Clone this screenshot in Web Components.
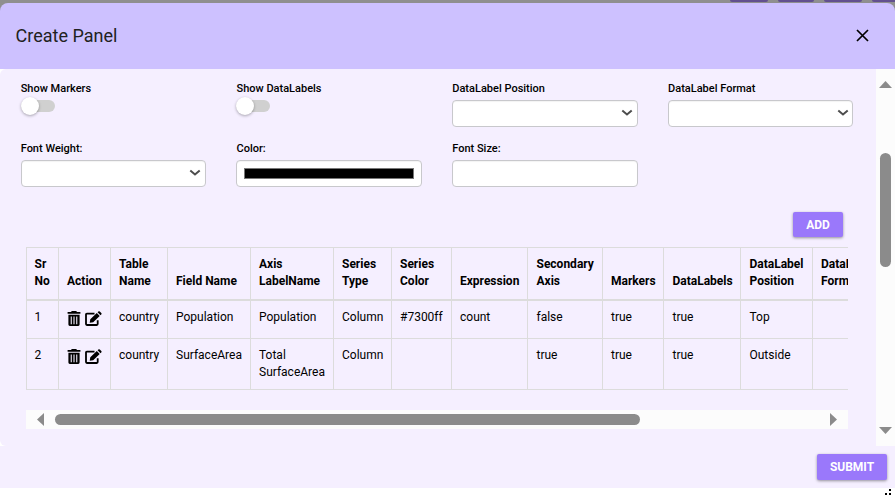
<!DOCTYPE html>
<html lang="en">
<head>
<meta charset="utf-8">
<title>Create Panel</title>
<style>
html,body{margin:0;padding:0;width:895px;height:496px;overflow:hidden;background:#fff}
body{font-family:Roboto,"Liberation Sans",sans-serif;color:#000}
</style>
</head>
<body>
<panel-dialog></panel-dialog>
<script>
function define(name, html, setup) {
  const tpl = document.createElement('template');
  tpl.innerHTML = html;
  customElements.define(name, class extends HTMLElement {
    connectedCallback() {
      if (this.shadowRoot) return;
      this.attachShadow({ mode: 'open' }).appendChild(tpl.content.cloneNode(true));
      if (setup) setup(this.shadowRoot, this);
    }
  });
}

define('page-strip', `
<style>
:host{display:flex;justify-content:flex-end;gap:10px;height:3px;background:#8f8f8f}
i{width:38px;height:2px;background:#62508f;border-radius:0 0 2px 2px}
i:nth-child(3){width:36px}
i:last-child{width:24px;margin-right:-1px}
</style><i></i><i></i><i></i><i></i>`);

define('dialog-header', `
<style>
:host{display:block;background:#8f8f8f;height:66px}
header{box-sizing:border-box;height:66px;display:flex;align-items:center;justify-content:space-between;padding:0 26px 0 15.5px;background:#cdc1ff;border-radius:8px 8px 0 0}
h1{margin:0;font-size:18px;line-height:24px;font-weight:400;color:#212121;letter-spacing:.01px}
svg{display:block;margin-top:-2px}
</style>
<header><h1><slot></slot></h1>
<svg width="13" height="13" viewBox="0 0 13 13" fill="none" stroke="#000" stroke-width="1.7"><path d="M1 1L12 12M12 1L1 12"/></svg></header>`);

define('form-field', `
<style>
:host{display:block;height:60px}
label{box-sizing:border-box;display:block;font-size:11px;line-height:16px;font-weight:500;height:20px;padding-top:1px;white-space:nowrap}
</style><label></label><slot></slot>`, (root, el) => {
  root.querySelector('label').textContent = el.getAttribute('label');
});

define('toggle-switch', `
<style>
:host{display:flex;align-items:center;width:34px;height:12px}
span{flex:1;height:12px;border-radius:6px;background:#d0d0d0;display:flex;align-items:center}
i{width:18px;height:18px;border-radius:50%;background:#fff;box-shadow:0 1px 3px rgba(0,0,0,.32)}
</style><span><i></i></span>`);

define('field-box', `
<style>
:host{box-sizing:border-box;display:flex;align-items:center;height:27px;background:#fff;border:1px solid #c8c8cc;border-radius:4px;box-shadow:inset 0 1px 1px rgba(0,0,0,.05)}
svg{display:none;margin-left:auto;margin-right:3.6px;margin-top:-1px}
:host([kind=select]) svg{display:block}
i{display:none;box-sizing:border-box;flex:1;height:11px;margin:0 7px;background:#000;border:1px solid #777}
:host([kind=color]) i{display:block}
</style><i></i>
<svg width="12" height="8" viewBox="0 0 12 8" fill="none" stroke="#4d4d4d" stroke-width="2"><path d="M1.3 1.5L6 5.5L10.7 1.5"/></svg>`);

define('action-button', `
<style>
:host{display:flex;align-items:center;justify-content:center;box-sizing:border-box;background:#9a78fb;color:#fff;border-radius:2px;font-size:12px;font-weight:700;line-height:16px;box-shadow:0 1px 3px rgba(0,0,0,.4)}
</style><slot></slot>`);

define('row-actions', `
<style>
:host{display:flex;gap:4.5px;padding-top:2px;margin-left:-.4px}
svg{display:block}
</style>
<svg width="14" height="15" viewBox="0 0 14 15"><path fill="#000" fill-rule="evenodd" d="M4.8 0H9.2L10 1H13.4V2.7H.6V1H4zM1.4 3.8H12.6V13.6Q12.6 15 11.2 15H2.8Q1.4 15 1.4 13.6zM3.7 5.4V13.2H4.8V5.4zM6.45 5.4V13.2H7.55V5.4zM9.2 5.4V13.2H10.3V5.4z"/></svg>
<svg width="17" height="15" viewBox="0 0 17 15"><path d="M9.5 2.7H1.9Q1 2.7 1 3.6V13.1Q1 14 1.9 14H11.8Q12.7 14 12.7 13.1V9.3" fill="none" stroke="#000" stroke-width="1.8"/><path d="M11.8 2L14.7 4.9L8.2 11.2L4.7 11.8L5.3 8.3zM12.6 1.2L13.3.5Q14 -.1 14.8.5L16.3 2Q16.9 2.8 16.2 3.5L15.5 4.2z"/></svg>`);

define('series-table', `
<style>
:host{display:block;height:143px;overflow:hidden}
.grid{display:grid;width:900px;box-sizing:border-box;grid-template-columns:32px 52px 57px 83px 83px 58px 60px 76px 75px 61px 77px 72px 114px;grid-template-rows:53px 38px 51px;border-top:1px solid #dcdcdc}
.c{box-sizing:border-box;border-left:1px solid #dcdcdc;border-bottom:1px solid #dcdcdc;padding:8px 0 0 8px;font-size:12px;line-height:17px;white-space:pre}
.h{border-bottom-width:2px;font-weight:700;padding:0 0 9px 8px;display:flex;align-items:flex-end}
.c:nth-child(13n+1){padding-left:7.6px}
.c:nth-child(13n+9),.c:nth-child(13n+11),.c:nth-child(13n+12){padding-left:8.5px}
</style><div class="grid"></div>`, root => {
  const grid = root.querySelector('.grid');
  const rows = [
    ['Sr\nNo','Action','Table\nName','Field Name','Axis\nLabelName','Series\nType','Series\nColor','Expression','Secondary\nAxis','Markers','DataLabels','DataLabel\nPosition','DataLabel\nFormat'],
    ['1',null,'country','Population','Population','Column','#7300ff','count','false','true','true','Top',''],
    ['2',null,'country','SurfaceArea','Total\nSurfaceArea','Column','','','true','true','true','Outside','']
  ];
  rows.forEach((row, r) => row.forEach(text => {
    const cell = document.createElement('div');
    cell.className = r ? 'c' : 'c h';
    if (text === null) cell.appendChild(document.createElement('row-actions'));
    else cell.textContent = text;
    grid.appendChild(cell);
  }));
});

define('scroll-track', `
<style>
:host{display:flex;align-items:center;box-sizing:border-box;background:#fcfcfc}
:host([axis=y]){flex-direction:column;width:19px;height:377px;padding:12px 0}
:host([axis=x]){height:19px;padding:0 11px}
svg{display:none;fill:#8b8b8b;flex:none}
b{background:#8b8b8b;border-radius:5.5px;flex:none}
:host([axis=y]) .y,:host([axis=x]) .x{display:block}
:host([axis=y]) b{width:11px;height:114px;margin-top:65px}
:host([axis=x]) b{height:11px;width:585px;margin-left:11px}
:host([axis=y]) .end{margin-top:auto}
:host([axis=x]) .end{margin-left:auto}
</style>
<svg class="y" width="13" height="7"><path d="M6.5 0L13 7H0z"/></svg>
<svg class="x" width="7" height="13"><path d="M0 6.5L7 0V13z"/></svg>
<b></b>
<svg class="y end" width="13" height="7"><path d="M6.5 7L13 0H0z"/></svg>
<svg class="x end" width="7" height="13"><path d="M7 6.5L0 0V13z"/></svg>`);

define('panel-dialog', `
<style>
:host{display:flex;flex-direction:column;width:895px;height:496px}
.body{display:flex;height:377px;background:#f5efff;border-radius:6px 0 0 6px}
.content{flex:1;min-width:0;height:377px;box-sizing:border-box;padding-top:11px}
.form{display:grid;grid-template-columns:repeat(4,185.4px);column-gap:30.4px;padding-left:20.7px;height:132px;align-content:start}
.add{display:flex;justify-content:flex-end;padding-right:33px;height:35px}
.add action-button{width:50px;height:25px}
series-table,.content scroll-track{margin-left:26px;width:822px}
.content scroll-track{margin-top:20px}
footer{display:flex;justify-content:flex-end;box-sizing:border-box;height:42px;padding:8px 8px 0 0;background:#f5efff}
footer action-button{width:70px;height:26px}
.grip{align-self:flex-end;margin:1px 3px 0 0;display:block}
</style>
<page-strip></page-strip>
<dialog-header>Create Panel</dialog-header>
<div class="body">
  <div class="content">
    <div class="form">
      <form-field label="Show Markers"><toggle-switch></toggle-switch></form-field>
      <form-field label="Show DataLabels"><toggle-switch></toggle-switch></form-field>
      <form-field label="DataLabel Position"><field-box kind="select"></field-box></form-field>
      <form-field label="DataLabel Format"><field-box kind="select"></field-box></form-field>
      <form-field label="Font Weight:"><field-box kind="select"></field-box></form-field>
      <form-field label="Color:"><field-box kind="color"></field-box></form-field>
      <form-field label="Font Size:"><field-box></field-box></form-field>
    </div>
    <div class="add"><action-button>ADD</action-button></div>
    <series-table></series-table>
    <scroll-track axis="x"></scroll-track>
  </div>
  <scroll-track axis="y"></scroll-track>
</div>
<footer><action-button>SUBMIT</action-button></footer>
<svg class="grip" width="7" height="6"><path d="M4 0H6V2H4zM4 4H6V6H4zM0 4H2V6H0z"/></svg>`);
</script>
</body>
</html>
